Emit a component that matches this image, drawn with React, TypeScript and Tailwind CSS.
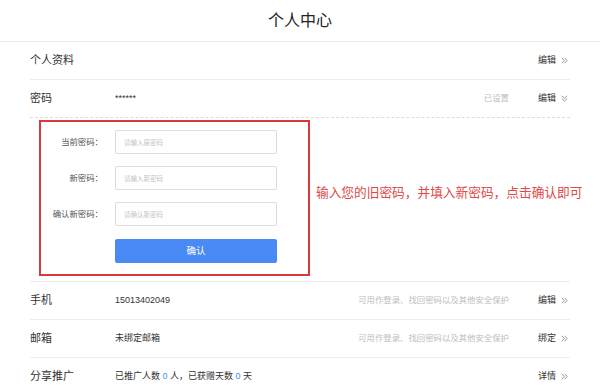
import React from "react";

// Double chevron pointing right (») or down (︾)
function Chevrons({ down = false }: { down?: boolean }) {
  return (
    <svg
      width="7"
      height="7"
      viewBox="0 0 7 7"
      className={down ? "rotate-90" : ""}
      fill="none"
      stroke="#8a8a8a"
      strokeWidth="0.9"
    >
      <path d="M0.8 0.8 L3.3 3.5 L0.8 6.2" />
      <path d="M3.6 0.8 L6.1 3.5 L3.6 6.2" />
    </svg>
  );
}

interface RowProps {
  label: string;
  value?: React.ReactNode;
  hint?: string;
  action: string;
  down?: boolean;
  dashed?: boolean;
}

function Row({ label, value, hint, action, down, dashed }: RowProps) {
  return (
    <div
      className={`flex items-center h-[38px] border-b ${
        dashed ? "border-dashed border-[#dcdcdc] h-[37px]" : "border-[#ececec]"
      }`}
    >
      <div className="w-[85px] text-[11px] text-[#333]">{label}</div>
      <div className="flex-1 text-[9px] text-[#333]">{value}</div>
      {hint && (
        <div className="mr-[29px] text-[8.4px] text-[#bdbdbd] whitespace-nowrap">{hint}</div>
      )}
      <div className="shrink-0 flex items-center gap-[5px] pr-[2px]">
        <span className="text-[9px] text-[#333]">{action}</span>
        <Chevrons down={down} />
      </div>
    </div>
  );
}

export default function App() {
  const hint = "可用作登录、找回密码以及其他安全保护";

  return (
    <div
      className="w-[600px] h-[391px] bg-white overflow-hidden"
      style={{ fontFamily: '"Liberation Sans", "Noto Sans CJK SC", sans-serif' }}
    >
      {/* Header */}
      <div className="h-[42px] border-b border-[#ececec] flex items-center justify-center text-[16px] text-[#222]">
        个人中心
      </div>

      <div className="mx-[30px]">
        <Row label="个人资料" action="编辑" />
        <Row label="密码" value="******" hint="已设置" action="编辑" down dashed />

        {/* Change password form */}
        <div className="h-[164px] border-b border-[#ececec] flex">
          <div className="shrink-0 ml-[9px] mt-[2px] w-[271px] h-[156px] border-2 border-[#d53b3b] pt-[8px]">
            <div className="flex flex-col gap-[12px]">
              {[
                ["当前密码：", "请输入原密码"],
                ["新密码：", "请输入新密码"],
                ["确认新密码：", "请确认新密码"],
              ].map(([l, p]) => (
                <div key={l} className="flex items-center">
                  <div className="w-[62px] text-right text-[8.4px] text-[#555]">{l}</div>
                  <input
                    type="password"
                    placeholder={p}
                    className="ml-[12px] w-[162px] h-[24px] border border-[#dcdcdc] rounded-[2px] px-[8px] text-[6.5px] placeholder:text-[#c4c4c4] outline-none"
                  />
                </div>
              ))}
            </div>
            <button className="ml-[74px] mt-[13px] w-[162px] h-[24px] rounded-[2px] bg-[#4a8af4] text-white text-[9.5px]">
              确认
            </button>
          </div>
          <div className="ml-[6px] mt-[66px] text-[12.7px] text-[#e04848] whitespace-nowrap">
            输入您的旧密码，并填入新密码，点击确认即可
          </div>
        </div>

        <Row label="手机" value="15013402049" hint={hint} action="编辑" />
        <Row label="邮箱" value="未绑定邮箱" hint={hint} action="绑定" />
        <Row
          label="分享推广"
          value={
            <span>
              已推广人数 <span className="text-[#4a8af4]">0</span> 人，已获赠天数{" "}
              <span className="text-[#4a8af4]">0</span> 天
            </span>
          }
          action="详情"
        />
      </div>
    </div>
  );
}
